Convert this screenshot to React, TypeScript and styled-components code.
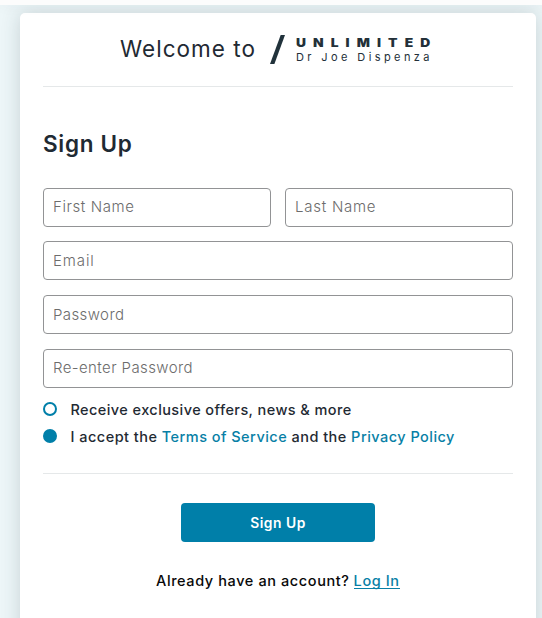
import React, { useState } from 'react';
import styled, { createGlobalStyle } from 'styled-components';

const GlobalStyle = createGlobalStyle`
  * { box-sizing: border-box; }
  html, body { margin: 0; padding: 0; overflow: hidden; }
  body { background: #edf6f8; font-family: Inter, "Liberation Sans", sans-serif; color: #1f2a33; }
`;

const Page = styled.div`
  height: 618px;
  overflow: hidden;
  background: #edf6f8;
`;

const TopBar = styled.header`
  position: relative;
  z-index: 1;
  height: 5px;
  background: #fcfcfc;
  box-shadow: 0 0 14px rgba(30, 60, 65, 0.07);
`;

const Card = styled.main`
  width: 516px;
  height: 660px;
  margin: 8px 0 0 20px;
  padding: 0 23px;
  background: #fff;
  border-radius: 5px;
  box-shadow: 0 0 19px rgba(35, 62, 68, 0.19);
`;

const Welcome = styled.div`
  display: flex;
  height: 74px;
  padding-left: 77px;
  border-bottom: 1px solid #e5e8e9;
`;

const WelcomeText = styled.h1`
  margin: 0;
  padding-top: 22px;
  width: 150px;
  flex-shrink: 0;
  font-size: 22.5px;
  line-height: 28px;
  font-weight: 400;
  letter-spacing: 1.02px;
  white-space: nowrap;
`;

const Slash = styled.svg`
  width: 16px;
  height: 30px;
  margin-top: 22px;
  flex-shrink: 0;
`;

const Brand = styled.div`
  margin: 24px 0 0 10px;
  white-space: nowrap;
  color: #233039;
`;

const BrandName = styled.div`
  font-size: 11.5px;
  line-height: 13px;
  font-weight: 900;
  letter-spacing: 5.9px;
  transform: scaleX(1.2);
  transform-origin: left;
`;

const BrandOwner = styled.div`
  font-size: 11px;
  line-height: 15px;
  letter-spacing: 3.4px;
`;

const Title = styled.h2`
  margin: 43px 0 0;
  font-size: 22.5px;
  line-height: 28px;
  font-weight: 600;
  letter-spacing: 0.7px;
`;

const Fields = styled.div`
  display: grid;
  grid-template-columns: 1fr 1fr;
  column-gap: 14px;
  row-gap: 14.6px;
  margin-top: 29.85px;
`;

const Field = styled.input<{ $wide?: boolean; $spacing: number }>`
  grid-column: ${p => (p.$wide ? '1 / -1' : 'auto')};
  width: 100%;
  min-width: 0;
  height: 39px;
  padding: 0 9px 1px;
  border: 1px solid #929395;
  border-radius: 4px;
  background: #fff;
  outline: none;
  font: 300 15px Inter, sans-serif;
  letter-spacing: ${p => p.$spacing}px;
  &::placeholder { color: #6c6c6c; opacity: 1; }
`;

const Options = styled.div`
  display: grid;
  grid-auto-rows: 27px;
  margin-top: 9.35px;
  height: 77px;
  border-bottom: 1px solid #e5e8e9;
`;

const Option = styled.div`
  display: flex;
  align-items: center;
`;

const Radio = styled.button<{ $checked: boolean }>`
  width: 14px;
  height: 14px;
  flex-shrink: 0;
  margin: 0 13.5px 3px 0;
  padding: 0;
  border: 2px solid #007fa9;
  border-radius: 50%;
  background: ${p => (p.$checked ? '#007fa9' : '#fff')};
`;

const Phrase = styled.span<{ $spacing: number }>`
  font-size: 14.5px;
  line-height: 20px;
  font-weight: 500;
  letter-spacing: ${p => p.$spacing}px;
  white-space: pre;
`;

const Link = styled.a`
  color: #087fa6;
  text-decoration: none;
`;

const Submit = styled.button`
  display: block;
  width: 194px;
  height: 39px;
  margin: 29px auto 0 138px;
  padding: 1px 0 0;
  border: 0;
  border-radius: 4px;
  background: #007fa9;
  color: #fff;
  font: 600 13.8px Inter, sans-serif;
  letter-spacing: 0.55px;
`;

const Login = styled.p`
  display: flex;
  gap: 4px;
  margin: 29px 0 0 113px;
  font-size: 14.5px;
  line-height: 20px;
  font-weight: 500;
  letter-spacing: 0.6px;
  color: #080808;
  white-space: nowrap;
`;

const LoginLink = styled(Link)`
  height: 18px;
  border-bottom: 1px solid #087fa6;
`;

export default function App() {
  const [offers, setOffers] = useState(false);
  const [terms, setTerms] = useState(true);
  return (
    <Page>
      <GlobalStyle />
      <TopBar />
      <Card>
        <Welcome>
          <WelcomeText>Welcome to</WelcomeText>
          <Slash viewBox="0 0 16 30"><path d="M10.7 0H15L4.4 29H0Z" fill="#21323b" /></Slash>
          <Brand>
            <BrandName>UNLIMITED</BrandName>
            <BrandOwner>Dr Joe Dispenza</BrandOwner>
          </Brand>
        </Welcome>
        <Title>Sign Up</Title>
        <Fields>
          <Field placeholder="First Name" $spacing={0.6} />
          <Field placeholder="Last Name" $spacing={0.75} />
          <Field placeholder="Email" $wide $spacing={0.9} />
          <Field placeholder="Password" type="password" $wide $spacing={0.4} />
          <Field placeholder="Re-enter Password" type="password" $wide $spacing={0.4} />
        </Fields>
        <Options>
          <Option>
            <Radio $checked={offers} aria-label="Receive offers" onClick={() => setOffers(!offers)} />
            <Phrase $spacing={0.42}>Receive exclusive offers, news &amp; more</Phrase>
          </Option>
          <Option>
            <Radio $checked={terms} aria-label="Accept terms" onClick={() => setTerms(!terms)} />
            <Phrase $spacing={0.47}>I accept the <Link>Terms of Service</Link> and the <Link>Privacy Policy</Link></Phrase>
          </Option>
        </Options>
        <Submit>Sign Up</Submit>
        <Login><span>Already have an account?</span><LoginLink>Log In</LoginLink></Login>
      </Card>
    </Page>
  );
}
